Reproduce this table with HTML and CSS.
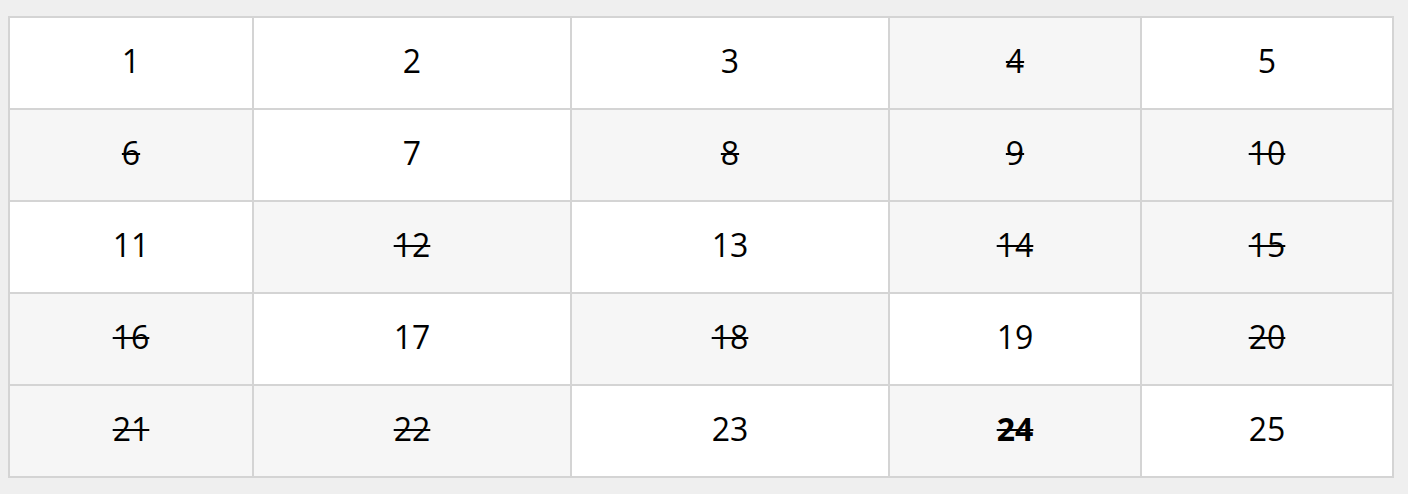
FILE: index.html
```html
<!DOCTYPE html>
<html>
<head>
<meta charset="utf-8">
<link rel="stylesheet" href="styles.css">
</head>
<body>
<table class="grid">
  <colgroup>
    <col class="c1"><col class="c2"><col class="c3"><col class="c4"><col class="c5">
  </colgroup>
  <tbody>
    <tr><td>1</td><td>2</td><td>3</td><td class="done">4</td><td>5</td></tr>
    <tr><td class="done">6</td><td>7</td><td class="done">8</td><td class="done">9</td><td class="done">10</td></tr>
    <tr><td>11</td><td class="done">12</td><td>13</td><td class="done">14</td><td class="done">15</td></tr>
    <tr><td class="done">16</td><td>17</td><td class="done">18</td><td>19</td><td class="done">20</td></tr>
    <tr><td class="done">21</td><td class="done">22</td><td>23</td><td class="done bold">24</td><td>25</td></tr>
  </tbody>
</table>
</body>
</html>
```
FILE: styles.css
```css
html, body {
  margin: 0;
  padding: 0;
}
body {
  background: #efefef;
  padding: 16px 8px;
  font-family: "Open Sans", "Noto Sans", sans-serif;
}
.grid {
  border-collapse: collapse;
  table-layout: fixed;
  width: 1386px;
  background: #ffffff;
}
.c1 { width: 244px; }
.c2 { width: 318px; }
.c3 { width: 318px; }
.c4 { width: 252px; }
.c5 { width: 252px; }
.grid td {
  border: 2px solid #d4d4d4;
  height: 92px;
  padding: 0 0 6px 0;
  box-sizing: border-box;
  text-align: center;
  vertical-align: middle;
  font-size: 32px;
  color: #000000;
}
.grid td.done {
  background: #f6f6f6;
  text-decoration: line-through;
  text-decoration-thickness: 1.5px;
}
.grid td.bold {
  font-weight: 700;
  text-decoration-thickness: 2px;
}
```
